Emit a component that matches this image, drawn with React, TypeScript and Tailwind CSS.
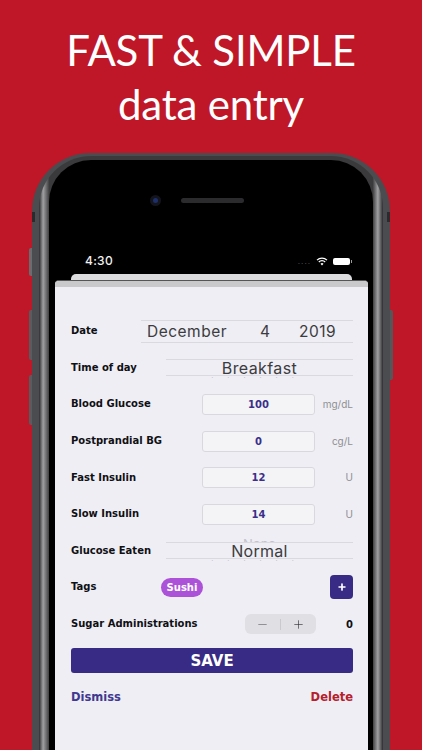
import { Plus, Minus } from 'lucide-react'

const label = "shrink-0 text-[10px] leading-none font-bold text-[#101014] font-['DejaVu_Sans']"

function Wheel({ children, above, below }: { children: React.ReactNode; above?: string; below?: boolean }) {
  return (
    <div className="relative flex-1 h-[17px] flex items-center justify-center border-y border-[#d9d9df]">
      {above && <span className="absolute left-0 right-0 -top-[5px] h-[4px] overflow-hidden text-center text-[13px] leading-[12px] text-[#c4c4ca]">{above}</span>}
      {children}
      {below && <span className="absolute left-0 right-0 -bottom-[5px] h-[3px] overflow-hidden text-center text-[7px] leading-[6px] tracking-[14px] text-[#b4b4ba]">''''''</span>}
    </div>
  )
}

function InputRow({ name, value, unit }: { name: string; value: string; unit: string }) {
  return (
    <div className="h-[36.6px] flex items-center">
      <span className={`w-[131px] ${label}`}>{name}</span>
      <div className="w-[113px] h-[21px] flex items-center justify-center rounded-[3px] bg-[#f4f4f6] border border-[#d8d8de] text-[10px] font-bold text-[#3b2f8a] font-['DejaVu_Sans']">
        {value}
      </div>
      <span className="flex-1 text-right text-[10px] text-[#8e8e93]">{unit}</span>
    </div>
  )
}

export default function App() {
  return (
    <div className="relative w-[422px] h-[750px] overflow-hidden bg-[#bf1728] font-['Inter',sans-serif]">
      <div className="pt-[23px] text-center text-white font-['Lato',sans-serif] text-[42px] tracking-[-0.2px] leading-[54px]">
        <div>FAST &amp; SIMPLE</div>
        <div>data entry</div>
      </div>

      {/* phone */}
      <div className="relative mt-[22px] mx-[32px] w-[358px] h-[600px] rounded-t-[58px] bg-[#4b4c4f] pt-[3px] px-[7px]">
        <span className="absolute -left-[3px] top-[95px] w-[3px] h-[28px] rounded-l-[2px] bg-[#6b6c70]" />
        <span className="absolute -left-[3px] top-[157px] w-[3px] h-[50px] rounded-l-[2px] bg-[#5a5b5f]" />
        <span className="absolute -left-[3px] top-[222px] w-[3px] h-[50px] rounded-l-[2px] bg-[#5a5b5f]" />
        <span className="absolute right-[-3px] top-[157px] w-[3px] h-[70px] rounded-r-[2px] bg-[#55565a]" />
        <span className="absolute left-0 top-[59px] w-[3px] h-[10px] bg-[#2b2b2d]" />
        <span className="absolute right-0 top-[59px] w-[3px] h-[10px] bg-[#2b2b2d]" />
        <div className="h-full rounded-t-[52px] bg-[linear-gradient(90deg,#2c2c2e_0%,#a0a0a3_1.2%,#3a3a3c_3%,#3a3a3c_97%,#a0a0a3_98.5%,#2c2c2e_100%)] pt-[4px] px-[10px]">
          <div className="h-full rounded-t-[42px] bg-black pl-[6px] pr-[5px]">
            <div className="h-full flex flex-col">
              {/* camera and speaker */}
              <div className="h-[45px] shrink-0 flex items-end justify-center gap-[20px] pr-[30px]">
                <span className="w-[11px] h-[11px] rounded-full bg-[#14151c] flex items-center justify-center mb-[-1px]">
                  <span className="w-[5px] h-[5px] rounded-full bg-[#1d2f6b]" />
                </span>
                <span className="w-[63px] h-[5px] rounded-full bg-[#2b2b2d] mb-[2px]" />
              </div>

              {/* status bar */}
              <div className="mt-[49px] h-[14px] shrink-0 flex items-center justify-between pl-[30px] pr-[16px] text-white">
                <span className="text-[12px] font-medium tracking-[0.3px] text-[#f0f0f0]">4:30</span>
                <div className="flex items-center gap-[5px]">
                  <span className="text-[8px] leading-none tracking-[1px] text-[#555]">....</span>
                  <svg width="12" height="9" viewBox="0 0 12 9" fill="none" stroke="white">
                    <path d="M1 3.2a7 7 0 0 1 10 0" strokeWidth="1.2" />
                    <path d="M2.8 5a4.5 4.5 0 0 1 6.4 0" strokeWidth="1.2" />
                    <path d="M6 8.6 4.5 6.8a2.2 2.2 0 0 1 3 0Z" fill="white" stroke="none" />
                  </svg>
                  <div className="flex items-center gap-[1px]">
                    <span className="w-[17px] h-[7px] rounded-[2px] bg-white" />
                    <span className="w-[1px] h-[3px] bg-[#999]" />
                  </div>
                </div>
              </div>

              {/* back card */}
              <div className="mt-[6px] mx-[16px] h-[6px] shrink-0 rounded-t-[5px] bg-[#dcdcde]" />

              {/* sheet */}
              <div className="flex-1 rounded-t-[4px] bg-[#eeeef4] overflow-hidden border-t border-[#555]">
                <div className="h-[6px] bg-[#c9c9cb]" />
                <div className="pl-[16px] pr-[15px] pt-[26px]">
                  <div className="h-[36.6px] flex items-center">
                    <span className={`w-[70px] ${label}`}>Date</span>
                    <div className="flex-1 h-[23px] flex items-center border-y border-[#d9d9df] text-[15.5px] tracking-[0.5px] text-[#3c3c40]">
                      <span className="ml-[6px] w-[113px]">December</span>
                      <span className="w-[39px]">4</span>
                      <span>2019</span>
                    </div>
                  </div>

                  <div className="h-[36.6px] flex items-center">
                    <span className={`w-[95px] ${label}`}>Time of day</span>
                    <Wheel below>
                      <span className="text-[16px] tracking-[0.4px] text-[#3c3c40]">Breakfast</span>
                    </Wheel>
                  </div>

                  <InputRow name="Blood Glucose" value="100" unit="mg/dL" />
                  <InputRow name="Postprandial BG" value="0" unit="cg/L" />
                  <InputRow name="Fast Insulin" value="12" unit="U" />
                  <InputRow name="Slow Insulin" value="14" unit="U" />

                  <div className="h-[36.6px] flex items-center">
                    <span className={`w-[95px] ${label}`}>Glucose Eaten</span>
                    <Wheel above="None" below>
                      <span className="text-[16px] tracking-[0.3px] text-[#3c3c40]">Normal</span>
                    </Wheel>
                  </div>

                  <div className="h-[36.6px] flex items-center">
                    <span className={`w-[90px] ${label}`}>Tags</span>
                    <span className="w-[42px] h-[19px] flex items-center justify-center rounded-full bg-[#ac52d8] text-[10px] font-bold text-white font-['DejaVu_Sans']">Sushi</span>
                    <button className="ml-auto w-[23px] h-[24px] flex items-center justify-center rounded-[4px] bg-[#372b85] text-white">
                      <Plus size={10} strokeWidth={4} />
                    </button>
                  </div>

                  <div className="h-[36.6px] flex items-center">
                    <span className={`w-[174px] ${label}`}>Sugar Administrations</span>
                    <div className="w-[71px] h-[20px] flex items-center rounded-[6px] bg-[#dfdfe4] text-[#333]">
                      <div className="flex-1 flex justify-center"><Minus size={13} strokeWidth={1.2} className="text-[#666]" /></div>
                      <span className="w-px h-[11px] bg-[#c9c9ce]" />
                      <div className="flex-1 flex justify-center"><Plus size={13} strokeWidth={1.2} /></div>
                    </div>
                    <span className="ml-auto text-[10px] font-bold text-[#101014] font-['DejaVu_Sans']">0</span>
                  </div>

                  <button className="mt-[6px] w-full h-[25px] rounded-[3px] bg-[#372b85] text-white text-[15px] font-bold font-['DejaVu_Sans']">SAVE</button>

                  <div className="mt-[16px] flex justify-between text-[11.5px] font-bold font-['DejaVu_Sans']">
                    <span className="text-[#413890]">Dismiss</span>
                    <span className="text-[#b5202c]">Delete</span>
                  </div>
                </div>
              </div>
            </div>
          </div>
        </div>
      </div>
    </div>
  )
}
